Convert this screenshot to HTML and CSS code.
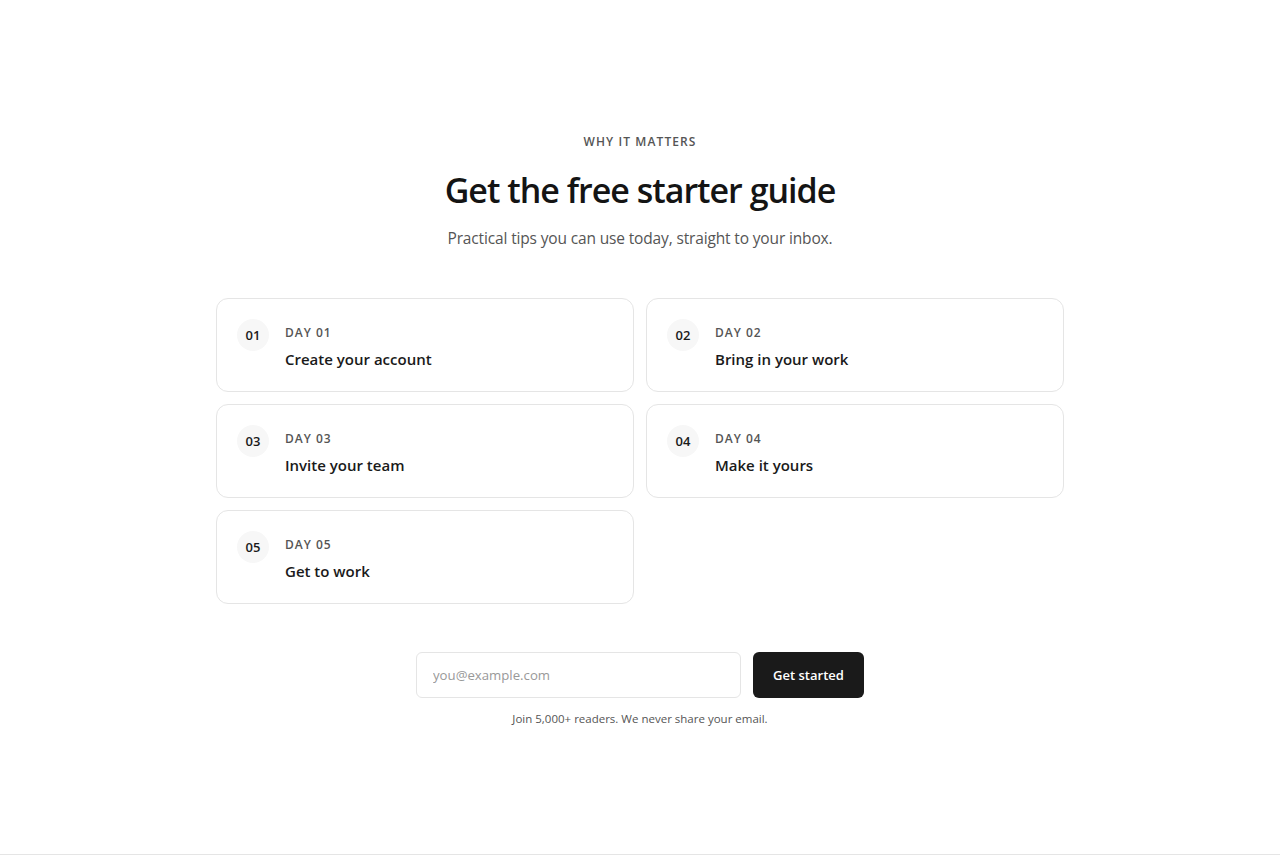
FILE: index.html
```html
<!DOCTYPE html>
<html lang="en">
<head>
<meta charset="utf-8">
<title>Get the free starter guide</title>
<link rel="stylesheet" href="styles.css">
</head>
<body>
<section class="signup">
  <div class="inner">
    <p class="eyebrow">WHY IT MATTERS</p>
    <h1 class="title">Get the free starter guide</h1>
    <p class="subtitle">Practical tips you can use today, straight to your inbox.</p>
    <ol class="days">
      <li class="day"><span class="num">01</span><div class="day-text"><span class="day-label">DAY 01</span><span class="day-title">Create your account</span></div></li>
      <li class="day"><span class="num">02</span><div class="day-text"><span class="day-label">DAY 02</span><span class="day-title">Bring in your work</span></div></li>
      <li class="day"><span class="num">03</span><div class="day-text"><span class="day-label">DAY 03</span><span class="day-title">Invite your team</span></div></li>
      <li class="day"><span class="num">04</span><div class="day-text"><span class="day-label">DAY 04</span><span class="day-title">Make it yours</span></div></li>
      <li class="day"><span class="num">05</span><div class="day-text"><span class="day-label">DAY 05</span><span class="day-title">Get to work</span></div></li>
    </ol>
    <form class="form">
      <input class="email" type="email" placeholder="you@example.com">
      <button class="btn" type="button">Get started</button>
    </form>
    <p class="note">Join 5,000+ readers. We never share your email.</p>
  </div>
</section>
</body>
</html>
```
FILE: styles.css
```css
* { box-sizing: border-box; }
html, body { margin: 0; padding: 0; background: #fff; }
body {
  font-family: "Open Sans", "Noto Sans", sans-serif;
  color: #1a1a1a;
}
.signup {
  height: 855px;
  border-bottom: 1px solid #e5e5e5;
  padding-top: 133px;
}
.inner {
  width: 848px;
  margin: 0 auto;
  display: flex;
  flex-direction: column;
  align-items: center;
}
.eyebrow {
  margin: 0;
  font-size: 12px;
  line-height: 18px;
  letter-spacing: 1.1px;
  font-weight: 600;
  color: #555;
}
.title {
  margin: 17px 0 0;
  font-size: 34px;
  line-height: 44px;
  font-weight: 600;
  letter-spacing: -1px;
  color: #141414;
}
.subtitle {
  margin: 14px 0 0;
  font-size: 15.5px;
  line-height: 24px;
  letter-spacing: -0.15px;
  color: #555;
}
.days {
  list-style: none;
  margin: 48px 0 0;
  padding: 0;
  width: 100%;
  display: grid;
  grid-template-columns: 1fr 1fr;
  gap: 12px;
}
.day {
  height: 94px;
  border: 1px solid #e5e5e5;
  border-radius: 12px;
  padding: 20px;
  display: flex;
  gap: 16px;
  align-items: flex-start;
}
.num {
  flex: none;
  width: 32px;
  height: 32px;
  border-radius: 50%;
  background: #f7f7f7;
  display: flex;
  align-items: center;
  justify-content: center;
  font-size: 13px;
  font-weight: 600;
  color: #1a1a1a;
}
.day-text {
  display: flex;
  flex-direction: column;
  gap: 7px;
  padding-top: 6px;
}
.day-label {
  font-size: 12px;
  line-height: 16px;
  letter-spacing: 1px;
  font-weight: 600;
  color: #555;
}
.day-title {
  font-size: 15px;
  line-height: 22px;
  font-weight: 600;
  color: #1a1a1a;
}
.form {
  margin-top: 48px;
  display: flex;
  gap: 12px;
}
.email {
  width: 325px;
  height: 46px;
  border: 1px solid #e5e5e5;
  border-radius: 6px;
  padding: 0 16px;
  font: inherit;
  font-size: 13.2px;
  color: #1a1a1a;
  outline: none;
}
.email::placeholder { color: #999; }
.btn {
  width: 111px;
  height: 46px;
  border: 0;
  border-radius: 6px;
  background: #1a1a1a;
  color: #fff;
  font: inherit;
  font-size: 13px;
  font-weight: 600;
  cursor: pointer;
}
.note {
  margin: 12px 0 0;
  font-size: 11.5px;
  line-height: 18px;
  color: #555;
}
```
